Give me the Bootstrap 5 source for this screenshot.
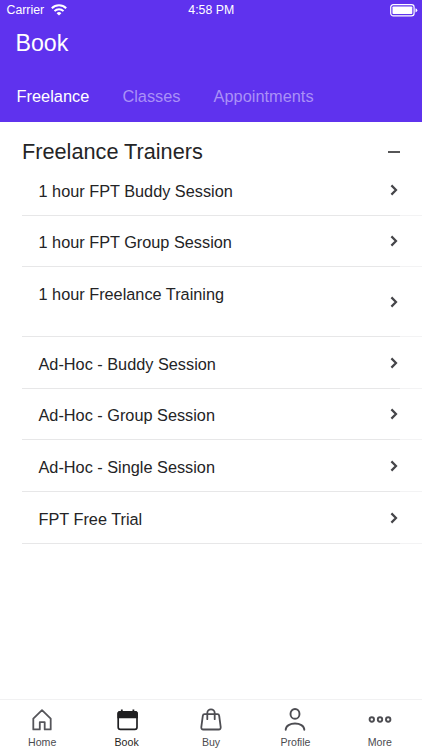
<!DOCTYPE html>
<html lang="en">
<head>
<meta charset="utf-8">
<meta name="viewport" content="width=device-width, initial-scale=1">
<title>Book</title>
<link href="https://cdn.jsdelivr.net/npm/bootstrap@5.3.0/dist/css/bootstrap.min.css" rel="stylesheet">
<style>
body{font-family:"Liberation Sans",Arial,sans-serif;color:#242426;height:750px;overflow:hidden;background:#fff}
svg{display:block;flex:none}
.app-header{background:#5f32ee;height:122px;color:#fff}
.status-bar{height:20px;font-size:12.3px;line-height:20px;padding:0 4px 0 6.5px}
.status-bar>*{flex:1 1 0}
.status-bar .clock{padding-right:2px}
.status-bar .wifi{margin-left:6.5px}
.screen-title{font-size:23.2px;line-height:28px;font-weight:400;padding:9px 0 0 15.5px;margin:0}
.tabs{padding:26px 0 0 16.6px;gap:33.1px}
.tabs .nav-link{padding:0;font-size:16.35px;line-height:26px;color:#aa90f7}
.tabs .nav-link.active{color:#fff}
.group-title{height:42px;padding:18px 22.5px 0 22px}
.group-title h2{font-size:21.7px;line-height:24px;font-weight:400;margin:0}
.sessions{padding-left:22px;border-radius:0}
.session{height:51.6px;padding:1.6px 24px 0 16.5px;border:0;font-size:16.3px;line-height:20px;color:#242426;
 background:linear-gradient(90deg,#e7e7e8 378px,#f3f3f4 378px) bottom/100% 1px no-repeat}
.sessions .session{border-radius:0}
.session svg{position:relative;top:-1px}
.session.tall{height:70px}
.session.tall span{align-self:flex-start;margin-top:15.4px}
.tab-bar{height:51px;border-top:1px solid #f1f1f2;background:#fff}
.tab-bar .nav-link{padding:6px 0 0;color:#4b4b4f;font-size:10.6px;line-height:14px}
.tab-bar .nav-link svg{margin:0 auto 3px}
.tab-bar .nav-link.active{color:#1f1f21}
</style>
<script src="https://cdn.jsdelivr.net/npm/bootstrap@5.3.0/dist/js/bootstrap.bundle.min.js"></script>
</head>
<body class="d-flex flex-column">
<svg width="0" height="0" class="position-absolute" aria-hidden="true"><symbol id="chevron" viewBox="0 0 8 12"><path d="M1.4 1.4 6 6 1.4 10.6" fill="none" stroke="#454549" stroke-width="2.2"/></symbol></svg>
<header class="app-header">
 <div class="status-bar d-flex align-items-center">
  <div class="d-flex align-items-center"><span>Carrier</span>
   <svg class="wifi" width="16" height="12" viewBox="0 0 16 12" fill="none" stroke="#fff" stroke-width="2"><path d="M.8 4.3a10.2 10.2 0 0 1 14.4 0M3.5 7.1a6.4 6.4 0 0 1 9 0"/><path d="M8 11.6 5.6 9.2a3.4 3.4 0 0 1 4.8 0z" fill="#fff" stroke="none"/></svg>
  </div>
  <div class="clock text-center">4:58 PM</div>
  <div><svg class="ms-auto" width="28" height="13" viewBox="0 0 28 13"><rect x=".7" y=".7" width="23.4" height="11.2" rx="2.6" fill="none" stroke="#fff" stroke-width="1.2"/><rect x="2.5" y="2.5" width="19.8" height="7.6" rx=".8" fill="#fff"/><path d="M25.5 4.2q1.8.6 1.8 2.1t-1.8 2.1z" fill="#fff"/></svg></div>
 </div>
 <h1 class="screen-title">Book</h1>
 <nav class="nav tabs flex-nowrap"><a class="nav-link active" href="#">Freelance</a><a class="nav-link" href="#">Classes</a><a class="nav-link" href="#">Appointments</a></nav>
</header>
<main class="flex-grow-1">
 <div class="group-title d-flex justify-content-between align-items-center"><h2>Freelance Trainers</h2><svg width="12" height="2" viewBox="0 0 12 2"><path d="M0 1h12" stroke="#2c2c2e" stroke-width="1.6"/></svg></div>
 <div class="list-group sessions">
  <a href="#" class="list-group-item session d-flex align-items-center justify-content-between"><span>1 hour FPT Buddy Session</span><svg width="8" height="12"><use href="#chevron"/></svg></a>
  <a href="#" class="list-group-item session d-flex align-items-center justify-content-between"><span>1 hour FPT Group Session</span><svg width="8" height="12"><use href="#chevron"/></svg></a>
  <a href="#" class="list-group-item session tall d-flex align-items-center justify-content-between"><span>1 hour Freelance Training</span><svg width="8" height="12"><use href="#chevron"/></svg></a>
  <a href="#" class="list-group-item session d-flex align-items-center justify-content-between"><span>Ad-Hoc - Buddy Session</span><svg width="8" height="12"><use href="#chevron"/></svg></a>
  <a href="#" class="list-group-item session d-flex align-items-center justify-content-between"><span>Ad-Hoc - Group Session</span><svg width="8" height="12"><use href="#chevron"/></svg></a>
  <a href="#" class="list-group-item session d-flex align-items-center justify-content-between"><span>Ad-Hoc - Single Session</span><svg width="8" height="12"><use href="#chevron"/></svg></a>
  <a href="#" class="list-group-item session d-flex align-items-center justify-content-between"><span>FPT Free Trial</span><svg width="8" height="12"><use href="#chevron"/></svg></a>
 </div>
</main>
<nav class="nav nav-fill nav-justified tab-bar flex-nowrap">
 <a class="nav-link" href="#"><svg width="24" height="26" viewBox="0 0 24 26" fill="none" stroke="#55555a" stroke-width="1.8" stroke-linejoin="round"><path d="M3.3 12.6 12 4.2l8.7 8.4v10.8h-6v-7.2H9.8v7.2H3.3z"/></svg>Home</a>
 <a class="nav-link active" href="#"><svg width="24" height="26" viewBox="0 0 24 26"><rect x="3.2" y="5.8" width="18.8" height="17.6" rx="2.2" fill="none" stroke="#1f1f21" stroke-width="1.7"/><path d="M2.4 12.3V7.5Q2.4 5 4.9 5h1V3.5h1.8V5h9.8V3.5h1.8V5h1q2.6 0 2.6 2.5v4.8z" fill="#1f1f21"/></svg>Book</a>
 <a class="nav-link" href="#"><svg width="24" height="26" viewBox="0 0 24 26" fill="none" stroke="#4d4d52" stroke-width="1.8" stroke-linecap="round" stroke-linejoin="round"><path d="M5.6 8.2h12.8q1.6 0 1.8 1.6l1.5 11.4q.2 2.3-2 2.3H4.3q-2.2 0-2-2.3L3.8 9.8q.2-1.6 1.8-1.6zM8.3 13.2V7a3.7 3.7 0 0 1 7.4 0v6.2"/></svg>Buy</a>
 <a class="nav-link" href="#"><svg width="24" height="26" viewBox="0 0 24 26" fill="none" stroke="#4d4d52" stroke-width="1.9" stroke-linecap="round"><ellipse cx="12" cy="7.9" rx="4.5" ry="4.9"/><path d="M2.7 23.8c0-8.4 18.6-8.4 18.6 0"/></svg>Profile</a>
 <a class="nav-link" href="#"><svg width="24" height="26" viewBox="0 0 24 26" fill="none" stroke="#4d4d52" stroke-width="1.9"><circle cx="3.8" cy="13.5" r="2.2"/><circle cx="12" cy="13.5" r="2.2"/><circle cx="20.2" cy="13.5" r="2.2"/></svg>More</a>
</nav>
</body>
</html>
